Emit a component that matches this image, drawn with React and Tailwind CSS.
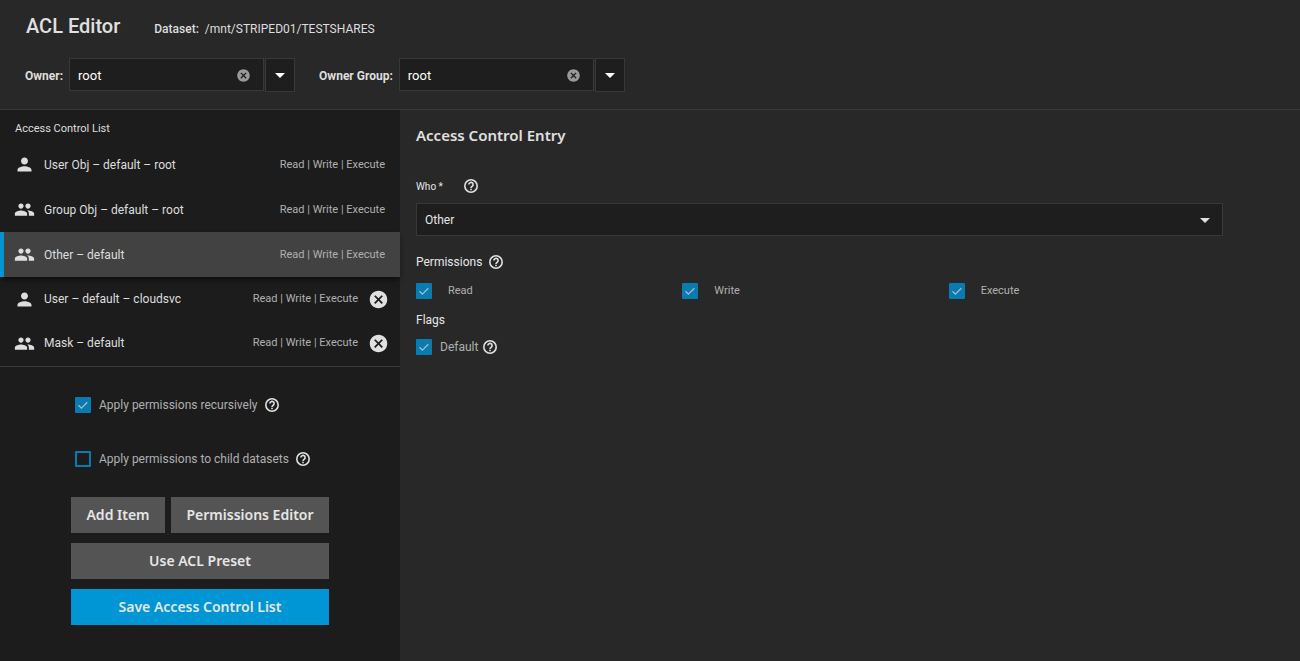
import React, { useState } from "react";
import { MdArrowDropDown, MdCancel, MdPeople, MdPerson } from "react-icons/md";

const ENTRIES = [
  { id: 1, icon: MdPerson, name: "User Obj – default – root" },
  { id: 2, icon: MdPeople, name: "Group Obj – default – root" },
  { id: 3, icon: MdPeople, name: "Other – default" },
  { id: 4, icon: MdPerson, name: "User – default – cloudsvc", removable: true },
  { id: 5, icon: MdPeople, name: "Mask – default", removable: true },
];

const PERMISSIONS = ["Read", "Write", "Execute"];

const Help = ({ label }) => (
  <button type="button" aria-label={label} className="text-[#e0e0e0]">
    <svg
      viewBox="0 0 16 16"
      className="size-4"
      fill="none"
      stroke="currentColor"
      strokeWidth="1.6"
    >
      <circle cx="8" cy="8" r="6.2" />
      <path d="M5.9 6.6a2.1 2.1 0 1 1 3.5 1.5C8.6 8.7 8 9.1 8 10" />
      <path d="M8 10.8v1.5" />
    </svg>
  </button>
);

const Checkbox = ({ id, defaultChecked }) => (
  <span className="grid size-4 shrink-0">
    <input
      id={id}
      type="checkbox"
      defaultChecked={defaultChecked}
      className="peer col-start-1 row-start-1 size-4 appearance-none rounded-[1px] border-2 border-[#087bb0] checked:bg-[#087bb0]"
    />
    <svg
      viewBox="0 0 16 16"
      className="pointer-events-none invisible col-start-1 row-start-1 size-4 peer-checked:visible"
      fill="none"
      stroke="#a9bcc6"
      strokeWidth="1.3"
    >
      <path d="M3.5 8.3 6.4 11.1 12.3 5.2" />
    </svg>
  </span>
);

const ComboBox = ({ id, label }) => {
  const [value, setValue] = useState("root");

  return (
    <div className="flex items-center">
      <label
        htmlFor={id}
        className="mr-1.5 pt-px text-xs font-bold text-[#dedede]"
      >
        {label}
      </label>
      <div className="flex items-start gap-px">
        <div className="flex h-[33px] w-[195px] items-center border border-[#383838] bg-[#1e1e1e] pr-3 pl-2">
          <input
            id={id}
            value={value}
            onChange={(e) => setValue(e.target.value)}
            className="h-full min-w-0 flex-1 bg-transparent pt-0.5 text-[13px] text-white outline-none"
          />
          <button
            type="button"
            aria-label={`Clear ${label}`}
            onClick={() => setValue("")}
            className="pt-0.5 text-[#999]"
          >
            <MdCancel size={15} />
          </button>
        </div>
        <button
          type="button"
          aria-label={`Show options for ${label}`}
          className="flex h-[34px] w-[30px] items-center justify-center border border-[#383838] bg-[#1e1e1e] text-white"
        >
          <MdArrowDropDown size={24} />
        </button>
      </div>
    </div>
  );
};

const Header = () => (
  <header className="border-b border-[#383838] pb-[17px] pl-[25px]">
    <div className="flex h-[58px] items-baseline gap-[34px] pt-3 pl-px">
      <h1 className="text-xl font-medium text-[#e0e0e0]">ACL Editor</h1>
      <p className="text-xs text-[#dedede]">
        <span className="mr-1.5 font-medium">Dataset:</span>
        /mnt/STRIPED01/TESTSHARES
      </p>
    </div>
    <div className="flex flex-wrap gap-6">
      <ComboBox id="owner" label="Owner:" />
      <ComboBox id="owner-group" label="Owner Group:" />
    </div>
  </header>
);

const EntryRow = ({ entry, selected, onSelect }) => {
  const Icon = entry.icon;

  return (
    <li
      className={`flex items-center pr-[15px] ${
        entry.removable ? "h-11" : "h-[45px]"
      } ${
        selected
          ? "relative border-l-4 border-[#0095d5] bg-[#424242] pl-2.5 shadow-md shadow-black/40"
          : "pl-3.5"
      }`}
    >
      <button
        type="button"
        onClick={onSelect}
        className="flex flex-1 items-center gap-[9px] text-left text-xs text-[#dedede]"
      >
        <Icon size={21} />
        {entry.name}
      </button>
      <span className="text-[11px] leading-5 text-[#b0b0b0]">
        Read | Write | Execute
      </span>
      {entry.removable && (
        <button
          type="button"
          aria-label={`Remove ${entry.name}`}
          className="-mr-1 ml-2.5 text-[#e0e0e0]"
        >
          <MdCancel size={21} />
        </button>
      )}
    </li>
  );
};

const ActionButton = ({ children, primary, wide }) => (
  <button
    type="button"
    className={`h-9 px-3.5 font-["Noto_Sans",sans-serif] text-sm font-semibold whitespace-nowrap text-[#e6e6e6] ${
      primary ? "bg-[#0095d5]" : "bg-[#545454]"
    } ${wide ? "w-full" : "flex-auto"}`}
  >
    {children}
  </button>
);

const Sidebar = () => {
  const [selectedId, setSelectedId] = useState(3);

  return (
    <aside className="w-[400px] shrink-0 bg-[#1c1c1c]">
      <h2 className="h-8 pt-[9px] pl-[15px] text-[11px] leading-5 text-[#dedede]">
        Access Control List
      </h2>
      <ul className="border-b border-[#383838] pb-px">
        {ENTRIES.map((entry) => (
          <EntryRow
            key={entry.id}
            entry={entry}
            selected={entry.id === selectedId}
            onSelect={() => setSelectedId(entry.id)}
          />
        ))}
      </ul>

      <div className="flex flex-col px-[71px] pt-7 pb-9">
        <div className="flex h-5 items-center pl-1 text-xs text-[#b0b0b0]">
          <Checkbox id="recursive" defaultChecked />
          <label htmlFor="recursive" className="mr-1.5 ml-2">
            Apply permissions recursively
          </label>
          <Help label="About recursive permissions" />
        </div>
        <div className="mt-[34px] flex h-5 items-center pl-1 text-xs text-[#b0b0b0]">
          <Checkbox id="children" />
          <label htmlFor="children" className="mr-1.5 ml-2">
            Apply permissions to child datasets
          </label>
          <Help label="About child datasets" />
        </div>

        <div className="mt-7 flex flex-col gap-2.5">
          <div className="flex gap-1.5">
            <ActionButton>Add Item</ActionButton>
            <ActionButton>Permissions Editor</ActionButton>
          </div>
          <ActionButton wide>Use ACL Preset</ActionButton>
          <ActionButton wide primary>
            Save Access Control List
          </ActionButton>
        </div>
      </div>
    </aside>
  );
};

const EntryForm = () => (
  <main className="min-w-0 flex-1 pt-[15px] pr-[77px] pl-4">
    <h2 className='font-["Noto_Sans",sans-serif] text-[15px] leading-5 font-semibold text-[#e0e0e0]'>
      Access Control Entry
    </h2>

    <div className="mt-8 flex h-[18px] items-center gap-5">
      <label htmlFor="who" className="text-[10px] text-[#e6e6e6]">
        Who *
      </label>
      <Help label="About who" />
    </div>
    <div className="mt-2 grid items-center">
      <select
        id="who"
        className="col-start-1 row-start-1 h-[33px] w-full appearance-none border border-[#383838] bg-[#1e1e1e] pl-2 text-xs text-[#e6e6e6]"
      >
        <option>Other</option>
        <option>User</option>
        <option>Group</option>
        <option>Mask</option>
      </select>
      <MdArrowDropDown
        size={24}
        className="pointer-events-none col-start-1 row-start-1 mr-1.5 justify-self-end text-[#e0e0e0]"
      />
    </div>

    <fieldset className="mt-4">
      <legend className="flex h-5 items-center gap-1.5 text-xs text-[#e6e6e6]">
        Permissions
        <Help label="About permissions" />
      </legend>
      <div className="mt-[9px] grid grid-cols-3 pr-2">
        {PERMISSIONS.map((name) => (
          <div key={name} className="flex h-5 items-center gap-4">
            <Checkbox id={name} defaultChecked />
            <label
              htmlFor={name}
              className="text-[11px] leading-5 text-[#b0b0b0]"
            >
              {name}
            </label>
          </div>
        ))}
      </div>
    </fieldset>

    <fieldset className="mt-[9px]">
      <legend className="flex h-5 items-center text-xs text-[#e6e6e6]">
        Flags
      </legend>
      <div className="mt-[7px] flex h-5 items-center text-xs text-[#b0b0b0]">
        <Checkbox id="default" defaultChecked />
        <label htmlFor="default" className="mr-1 ml-2">
          Default
        </label>
        <Help label="About default flag" />
      </div>
    </fieldset>
  </main>
);

const App = () => (
  <div className='flex min-h-screen flex-col bg-[#282828] font-["Roboto",sans-serif]'>
    <Header />
    <div className="flex flex-1">
      <Sidebar />
      <EntryForm />
    </div>
  </div>
);

export default App;
